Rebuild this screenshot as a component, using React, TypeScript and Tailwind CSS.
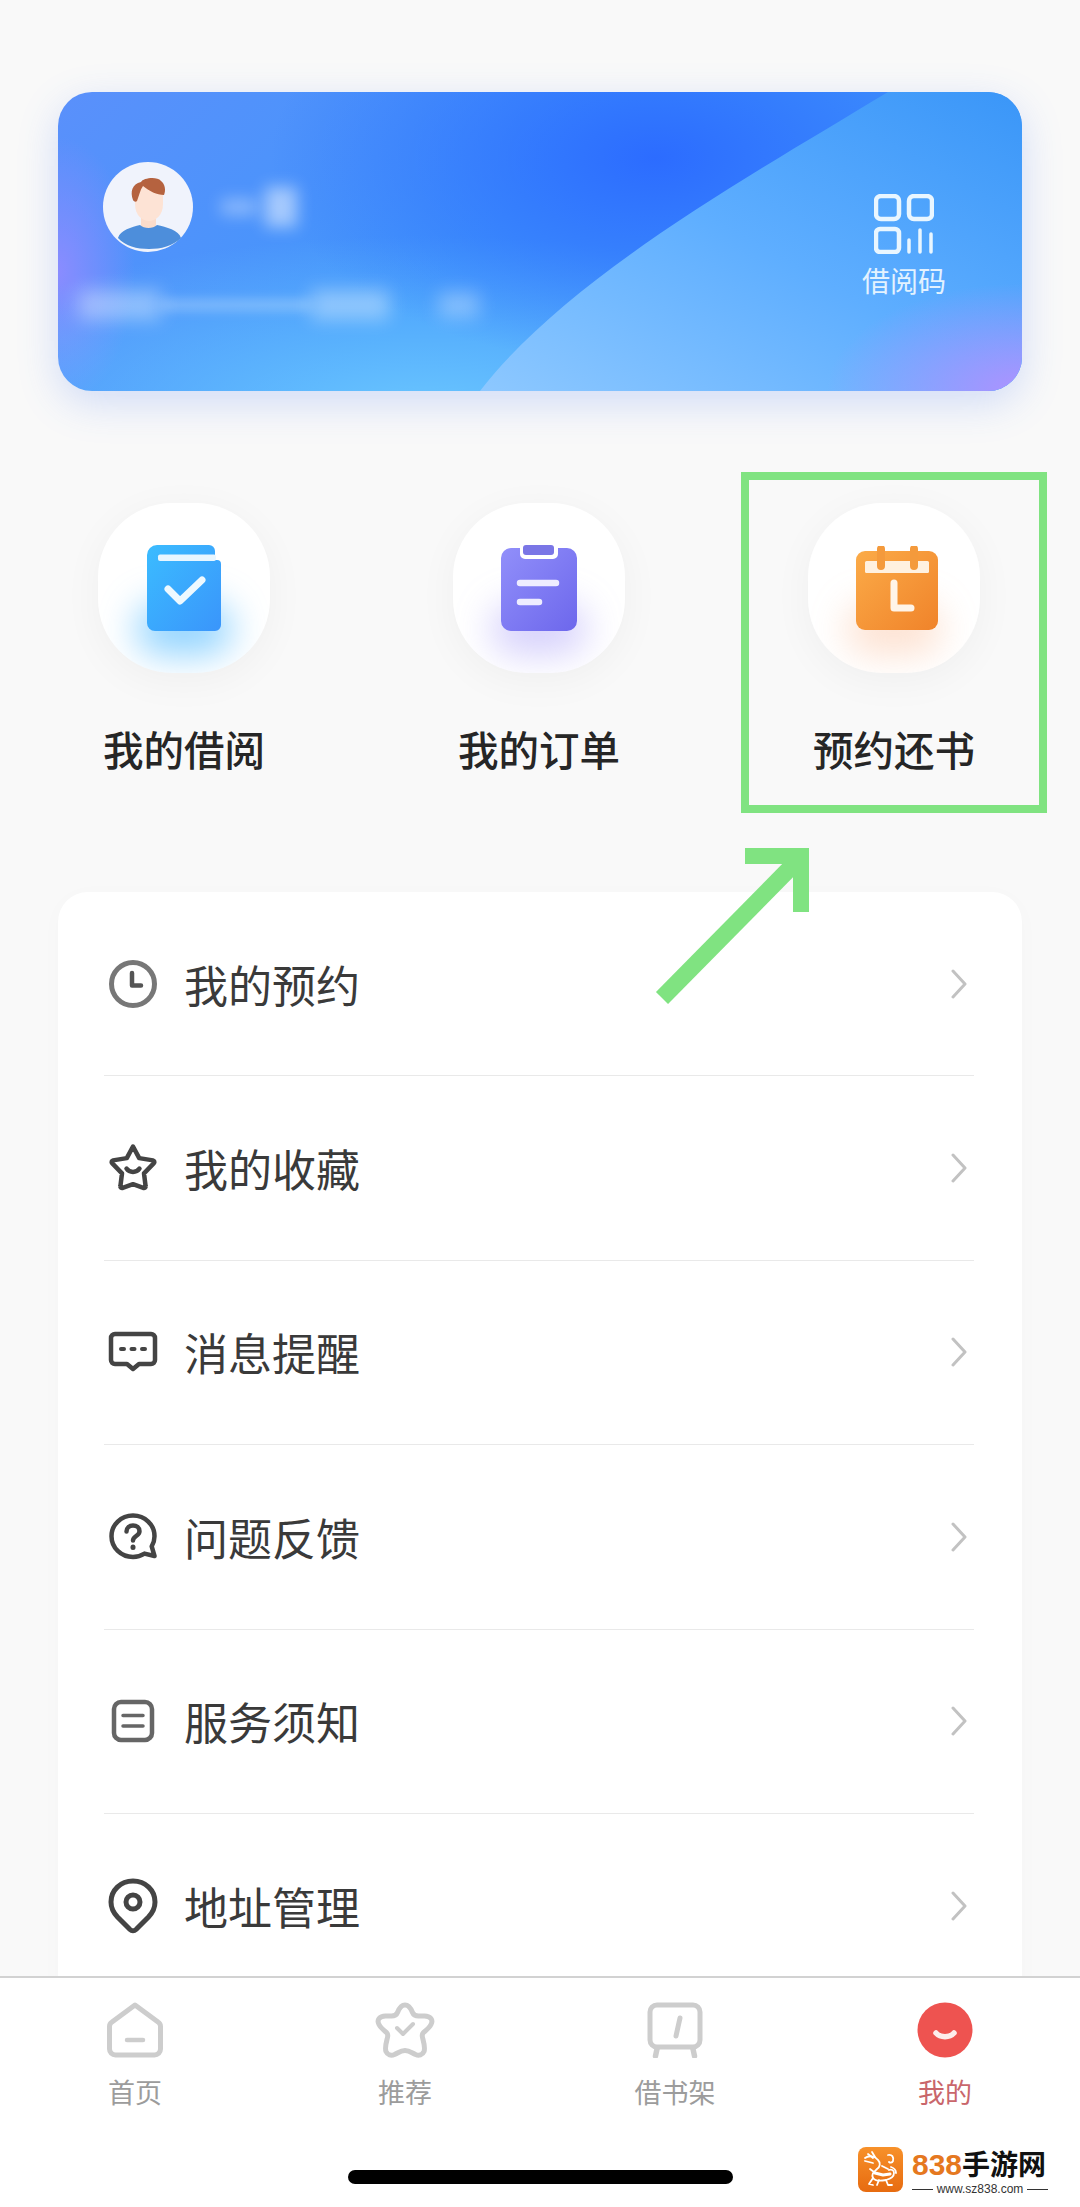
const menuRows = [
  { label: '我的预约', icon: <ClockIcon /> },
  { label: '我的收藏', icon: <StarIcon /> },
  { label: '消息提醒', icon: <MessageIcon /> },
  { label: '问题反馈', icon: <QuestionIcon /> },
  { label: '服务须知', icon: <NoticeIcon /> },
  { label: '地址管理', icon: <PinIcon /> },
];

function ClockIcon() {
  return (
    <svg viewBox="0 0 50 50" className="w-[50px] h-[50px]" fill="none" stroke="#666" strokeWidth="5" strokeLinecap="round" strokeLinejoin="round">
      <circle cx="25" cy="25" r="21.5" stroke="#777" />
      <path d="M24 14v12.5h9" strokeWidth="4.5" stroke="#555" />
    </svg>
  );
}

function StarIcon() {
  return (
    <svg viewBox="0 0 50 50" className="w-[50px] h-[50px]" fill="none" stroke="#444" strokeWidth="4.5" strokeLinecap="round" strokeLinejoin="round">
      <path d="M25 3.500l6.200 11.600 13.800 2.300c1.300.3 1.800 1.800.9 2.700L36 30.400l1.600 12.800c.2 1.300-1.100 2.300-2.300 1.700L25 41.200l-10.300 3.700c-1.200.6-2.500-.4-2.300-1.700L14 30.400 4.100 20.100c-.9-.9-.4-2.400.9-2.700l13.800-2.300z" />
      <path d="M18.500 25.500c3 4.500 10 4.500 13 0" />
    </svg>
  );
}

function MessageIcon() {
  return (
    <svg viewBox="0 0 50 50" className="w-[50px] h-[50px]" fill="none" stroke="#444" strokeWidth="4.5" strokeLinecap="round" strokeLinejoin="round">
      <path d="M7 7h36a4 4 0 0 1 4 4v22a4 4 0 0 1-4 4H31l-6 5-6-5H7a4 4 0 0 1-4-4V11a4 4 0 0 1 4-4z" />
      <path d="M13 22h3M23.500 22h3M34 22h3" strokeWidth="4" />
    </svg>
  );
}

function QuestionIcon() {
  return (
    <svg viewBox="0 0 50 50" className="w-[50px] h-[50px]" fill="none" stroke="#444" strokeWidth="4.5" strokeLinecap="round" strokeLinejoin="round">
      <path d="M25 3.500c12 0 21.500 9.200 21.500 20.700 0 3.800-1 7.200-2.800 10.200l2.800 9.600-10-2.400A22 22 0 0 1 25 45C13 45 3.500 35.700 3.500 24.200 3.500 12.700 13 3.500 25 3.500z" />
      <path d="M18.500 19.500c0-3.800 2.900-6 6.500-6s6.500 2.300 6.500 5.700c0 4.800-6.500 4.800-6.500 9.300" />
      <path d="M25 35v.4" strokeWidth="5" />
    </svg>
  );
}

function NoticeIcon() {
  return (
    <svg viewBox="0 0 50 50" className="w-[50px] h-[50px]" fill="none" stroke="#666" strokeWidth="4.5" strokeLinecap="round" strokeLinejoin="round">
      <rect x="6" y="6" width="38" height="38" rx="7" />
      <path d="M15 19.500h20M15 30h20" strokeWidth="3.500" />
    </svg>
  );
}

function PinIcon() {
  return (
    <svg viewBox="0 0 50 56" className="w-[50px] h-[56px]" fill="none" stroke="#444" strokeWidth="5" strokeLinecap="round" strokeLinejoin="round">
      <path d="M25 3C12.500 3 3 12.300 3 24c0 6 2.500 10.800 6.500 15L22 51.500c1.800 1.700 4.200 1.700 6 0L40.500 39c4-4.200 6.500-9 6.500-15C47 12.300 37.500 3 25 3z" />
      <circle cx="25" cy="24" r="7" />
    </svg>
  );
}

function BookTileIcon() {
  return (
    <svg viewBox="0 0 74 86" className="w-[74px] h-[86px]">
      <defs>
        <linearGradient id="bookFill" x1="0" y1="0" x2="1" y2="1">
          <stop offset="0" stopColor="#3bbcff" />
          <stop offset="1" stopColor="#3a95fb" />
        </linearGradient>
      </defs>
      <path d="M10 0h52a6 6 0 0 1 6 6v9h2a4 4 0 0 1 4 4v61a6 6 0 0 1-6 6H8a8 8 0 0 1-8-8V10A10 10 0 0 1 10 0z" fill="url(#bookFill)" />
      <rect x="11" y="9.500" width="58" height="6.500" rx="2" fill="#e8f6ff" />
      <path d="M21 44l12 12 22-21" fill="none" stroke="#eef9ff" strokeWidth="7" strokeLinecap="round" strokeLinejoin="round" />
    </svg>
  );
}

function ClipboardTileIcon() {
  return (
    <svg viewBox="0 0 76 86" className="w-[76px] h-[86px]">
      <defs>
        <linearGradient id="clipFill" x1="0" y1="0" x2="1" y2="1">
          <stop offset="0" stopColor="#918ffa" />
          <stop offset="1" stopColor="#6d67ec" />
        </linearGradient>
      </defs>
      <path d="M10 3h9v6a5 5 0 0 0 5 5h28a5 5 0 0 0 5-5V3h9a10 10 0 0 1 10 10v63a10 10 0 0 1-10 10H10A10 10 0 0 1 0 76V13A10 10 0 0 1 10 3z" fill="url(#clipFill)" />
      <rect x="22" y="0" width="31" height="10" rx="3" fill="#7a76e6" />
      <path d="M19 38h36M19 57h19" fill="none" stroke="#eeedff" strokeWidth="6.500" strokeLinecap="round" />
    </svg>
  );
}

function CalendarTileIcon() {
  return (
    <svg viewBox="0 0 82 84" className="w-[82px] h-[84px]">
      <defs>
        <linearGradient id="calFill" x1="0" y1="0" x2="1" y2="1">
          <stop offset="0" stopColor="#fbab48" />
          <stop offset="1" stopColor="#f0832a" />
        </linearGradient>
      </defs>
      <rect x="0" y="5" width="82" height="79" rx="9" fill="url(#calFill)" />
      <rect x="9" y="15" width="64" height="12" rx="1.500" fill="#fff1e0" />
      <path d="M25 3v17M58 3v17" stroke="#f49a3c" strokeWidth="8" strokeLinecap="round" />
      <path d="M38 37v25h17" fill="none" stroke="#fff4e8" strokeWidth="7" strokeLinecap="round" strokeLinejoin="round" />
    </svg>
  );
}

function Avatar() {
  return (
    <svg viewBox="0 0 90 90" className="w-[90px] h-[90px] shrink-0">
      <circle cx="45" cy="45" r="45" fill="#f0f3fc" />
      <path d="M38 48h15v18H38z" fill="#fbdccb" />
      <path d="M32 26c0-8 26-10 28 0v16c0 12-8 17-14 17s-14-5-14-17z" fill="#fde3d5" />
      <path d="M15 76c2-8 14-11 22-13 4 4 13 4 17 0 9 2 22 5 24 13-8 8-20 11-32 11-12 0-24-3-31-11z" fill="#4d8edb" />
      <path d="M30 38c-3-8-1-16 8-18 2-4 16-6 20-1 4 3 5 9 3 14-7 0-15-4-21-9-3 4-4 10-6 15-1 1-3 1-4-1z" fill="#b5623f" />
    </svg>
  );
}

function QrIcon() {
  return (
    <svg viewBox="0 0 60 60" className="w-[60px] h-[60px]" fill="none" stroke="#e9f6ff" strokeWidth="4.5" strokeLinecap="round">
      <rect x="2" y="2" width="23" height="23" rx="5" />
      <rect x="35" y="2" width="23" height="23" rx="5" />
      <rect x="2" y="35" width="23" height="23" rx="4" />
      <path d="M35 46v12M46 36v22M57 40v18" strokeWidth="3.500" />
    </svg>
  );
}

function CardWave() {
  return (
    <svg viewBox="0 0 964 299" className="absolute inset-0 w-full h-full" preserveAspectRatio="none">
      <defs>
        <linearGradient id="waveFill" x1="1" y1="0" x2="0" y2="1">
          <stop offset="0" stopColor="#3a96f8" />
          <stop offset="0.5" stopColor="#5eaeff" />
          <stop offset="1" stopColor="#8dc8ff" />
        </linearGradient>
        <radialGradient id="wavePurple" cx="1" cy="1" r="0.36">
          <stop offset="0" stopColor="#ae92ff" />
          <stop offset="1" stopColor="#ae92ff" stopOpacity="0" />
        </radialGradient>
      </defs>
      <path d="M830 0C690 85 510 185 422 299H964V0z" fill="url(#waveFill)" />
      <path d="M830 0C690 85 510 185 422 299H964V0z" fill="url(#wavePurple)" />
    </svg>
  );
}

function TabHome() {
  return (
    <svg viewBox="0 0 56 56" className="w-14 h-14" fill="none" stroke="#cdcdcd" strokeWidth="5" strokeLinecap="round" strokeLinejoin="round">
      <path d="M28 3L51 20c1.500 1 2.500 2.500 2.500 4.500V47a6 6 0 0 1-6 6H8.500a6 6 0 0 1-6-6V24.500C2.500 22.500 3.500 21 5 20z" />
      <path d="M20 38h16" strokeWidth="4.500" />
    </svg>
  );
}

function TabStar() {
  return (
    <svg viewBox="0 0 60 56" className="w-[60px] h-14" fill="none" stroke="#cdcdcd" strokeWidth="5" strokeLinecap="round" strokeLinejoin="round">
      <path d="M30 3c3.500 0 5.500 2.500 7.500 7.500 1 2.500 3 3.500 6 3.500h6c6 0 9 4 6.500 8.500-1.500 3-5 6-7.500 8-1.500 1.500-1.500 3-1 5 1 4 3 10 1.500 14-1.500 3.500-5 4.500-8.500 3-3.500-1.500-6-4-10.500-4s-7 2.500-10.500 4c-3.500 1.500-7 .5-8.500-3-1.500-4 .5-10 1.500-14 .5-2 .5-3.500-1-5-2.500-2-6-5-7.500-8C1.500 18 4.500 14 10.500 14h6c3 0 5-1 6-3.500C24.500 5.500 26.500 3 30 3z" />
      <path d="M22 26l6 6 10-10" strokeWidth="4" />
    </svg>
  );
}

function TabShelf() {
  return (
    <svg viewBox="0 0 56 56" className="w-14 h-14" fill="none" stroke="#cdcdcd" strokeWidth="5" strokeLinecap="round" strokeLinejoin="round">
      <rect x="3" y="3" width="50" height="42" rx="7" />
      <path d="M10 47l-1.500 7M46 47l1.500 7" strokeWidth="5.500" />
      <path d="M33 16l-4 18" strokeWidth="5" />
    </svg>
  );
}

function TabMine() {
  return (
    <svg viewBox="0 0 56 56" className="w-14 h-14">
      <circle cx="28" cy="28" r="27.500" fill="#ee5350" />
      <path d="M19 31c4.500 5 13.500 5 18 0" fill="none" stroke="#fdeceb" strokeWidth="5.500" strokeLinecap="round" />
    </svg>
  );
}

function DragonLogo() {
  return (
    <svg viewBox="0 0 45 45" className="w-[45px] h-[45px]" fill="none" stroke="#fff" strokeWidth="1.800" strokeLinecap="round" strokeLinejoin="round">
      <path d="M7 11c4-3 10-2 13 2 3 3 2 7-1 9-3 3-6 5-4 9 2 3 8 3 13 2 4-1 8-3 8-7 0-3-3-4-5-3" />
      <path d="M7 14l8 2M10 7l5 4M14 5l3 5M30 8c4-1 6 2 5 6-1 2-3 2-4 1M15 31l-4 6 4 1M28 33l2 5 4 0M21 33l-2 5M24 19l6 3M12 22l4 3M33 20c3 1 5 3 5 6" />
      <path d="M17 26l8 2 7-1" strokeWidth="3" />
    </svg>
  );
}

export default function App() {
  const tiles = [
    { label: '我的借阅', icon: <BookTileIcon />, glow: 'bg-[#39b0ff]/55', nudge: 'relative' },
    { label: '我的订单', icon: <ClipboardTileIcon />, glow: 'bg-[#8a7cf5]/35', nudge: 'relative' },
    { label: '预约还书', icon: <CalendarTileIcon />, glow: 'bg-[#f9a06a]/30', nudge: 'relative left-[3px]' },
  ];
  const tabs = [
    { label: '首页', icon: <TabHome /> },
    { label: '推荐', icon: <TabStar /> },
    { label: '借书架', icon: <TabShelf /> },
    { label: '我的', icon: <TabMine />, active: true },
  ];

  return (
    <div className="relative w-[1080px] h-[2207px] overflow-hidden flex flex-col bg-[#f9f9f9] font-['Noto_Sans_CJK_SC','Noto_Sans',sans-serif]">
      <main className="flex-1 min-h-0 overflow-hidden pt-[92px] px-[58px]">
        {/* Account card */}
        <section className="relative h-[299px] rounded-[34px] overflow-hidden flex justify-between shadow-[0_12px_40px_rgba(70,120,240,0.22)] bg-[radial-gradient(ellipse_40%_70%_at_62%_22%,#2c6cff_0%,transparent_100%),radial-gradient(ellipse_55%_60%_at_38%_108%,#6ac6ff_0%,transparent_100%),radial-gradient(ellipse_8%_45%_at_0%_60%,#8a8cff_0%,transparent_100%),linear-gradient(135deg,#5a90fb_0%,#4196fb_45%,#4196fb_100%)]">
          <CardWave />
          <div className="relative flex flex-col pl-[45px] pt-[70px]">
            <div className="flex items-center">
              <Avatar />
              <div className="ml-[28px] w-[36px] h-[16px] bg-white/35 blur-[8px]" />
              <div className="ml-[8px] w-[32px] h-[40px] bg-white/50 blur-[8px]" />
            </div>
            <div className="-ml-[24px] mt-[38px] flex items-center">
              <div className="w-[82px] h-[30px] bg-white/35 blur-[9px]" />
              <div className="w-[150px] h-[10px] bg-white/30 blur-[6px]" />
              <div className="w-[78px] h-[30px] bg-white/35 blur-[9px]" />
              <div className="ml-[50px] w-[40px] h-[26px] bg-white/30 blur-[9px]" />
            </div>
          </div>
          <div className="relative flex flex-col items-center pr-[76px] pt-[102px]">
            <QrIcon />
            <span className="mt-[6px] text-[28px] leading-[40px] text-[#e3f2ff]">借阅码</span>
          </div>
        </section>

        {/* Shortcut tiles */}
        <section className="mt-[112px] pl-[40px] pr-[42px] flex justify-between">
          {tiles.map(t => (
            <div key={t.label} className="w-[172px] flex flex-col items-center">
              <div className="relative w-[172px] h-[170px] rounded-[74px] bg-white shadow-[0_8px_40px_rgba(0,0,0,0.045)] flex items-center justify-center overflow-hidden">
                <div className={`absolute left-[38px] top-[100px] w-[96px] h-[52px] rounded-full blur-[18px] ${t.glow}`} />
                <div className={t.nudge}>{t.icon}</div>
              </div>
              <span className="mt-[47px] text-[40.5px] leading-[58px] font-medium text-[#262626] whitespace-nowrap">{t.label}</span>
            </div>
          ))}
        </section>

        {/* Menu list, runs on under the tab bar */}
        <section className="mt-[114px] rounded-t-[30px] bg-white pl-[46px] pr-[48px] shadow-[0_4px_24px_rgba(0,0,0,0.02)]">
          {menuRows.map(row => (
            <div key={row.label} className="h-[184.4px] flex items-center border-b border-[#e9e9e9]">
              <div className="ml-[4px] w-[50px] flex justify-center">{row.icon}</div>
              <span className="ml-[26px] text-[44px] leading-[60px] text-[#3a3a3a]">{row.label}</span>
              <svg viewBox="0 0 16 30" className="ml-auto mr-[7px] w-4 h-[30px]" fill="none" stroke="#c2c2c2" strokeWidth="3" strokeLinecap="round" strokeLinejoin="round">
                <path d="M2 2l12 13L2 28" />
              </svg>
            </div>
          ))}
        </section>
      </main>

      {/* Tab bar */}
      <nav className="relative h-[231px] shrink-0 bg-white border-t-2 border-[#d2d2d2]">
        <div className="grid grid-cols-4 pt-[24px]">
          {tabs.map(t => (
            <div key={t.label} className="flex flex-col items-center">
              {t.icon}
              <span className={`mt-[15px] text-[27px] leading-[38px] ${t.active ? 'text-[#c9666b]' : 'text-[#9c9c9c]'}`}>{t.label}</span>
            </div>
          ))}
        </div>
        <div className="mt-[59px] mx-auto w-[385px] h-[14px] rounded-full bg-black" />
      </nav>

      {/* Highlight box and arrow drawn over the page */}
      <div className="absolute left-[741px] top-[472px] w-[306px] h-[341px] border-8 border-[#80e381]" />
      <svg viewBox="0 0 170 175" className="absolute left-[650px] top-[838px] w-[170px] h-[175px]" fill="none">
        <path d="M12 160L150 20" stroke="#80e381" strokeWidth="17" />
        <path d="M95 18H151V74" stroke="#80e381" strokeWidth="16" />
      </svg>

      {/* Site watermark */}
      <div className="absolute left-[858px] top-[2147px] flex items-start">
        <div className="w-[45px] h-[45px] rounded-[8px] bg-[linear-gradient(180deg,#f7912a,#e76b10)]">
          <DragonLogo />
        </div>
        <div className="ml-[9px] w-[136px] flex flex-col">
          <div className="text-[28px] leading-[32px] font-bold text-[#111] whitespace-nowrap">
            <span className="text-[30px] text-[#e5781f] font-['Liberation_Sans',sans-serif]">838</span>手游网
          </div>
          <div className="mt-[1px] flex items-center justify-between">
            <span className="w-[21px] h-px bg-[#333]" />
            <span className="text-[12px] leading-[14px] text-[#333] font-['Liberation_Sans',sans-serif]">www.sz838.com</span>
            <span className="w-[21px] h-px bg-[#333]" />
          </div>
        </div>
      </div>
    </div>
  );
}
